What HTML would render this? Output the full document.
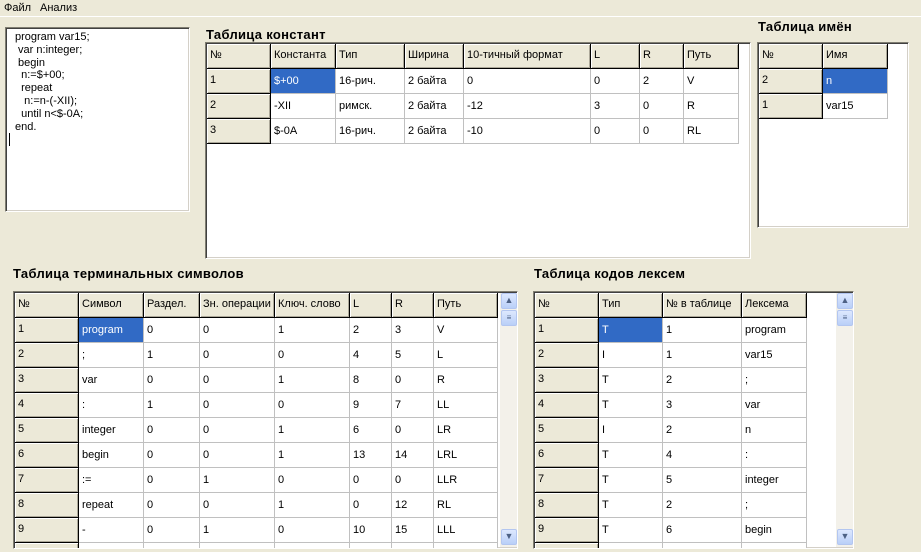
<!DOCTYPE html>
<html><head><meta charset="utf-8"><style>
*{box-sizing:border-box;margin:0;padding:0}
body{width:921px;height:552px;background:#ece9d8;font-family:"Liberation Sans","DejaVu Sans",sans-serif;font-size:11px;color:#000;position:relative;overflow:hidden}
.menu{position:absolute;left:0;top:0;width:921px;height:17px;border-bottom:1px solid #fff}
.menu span{position:absolute;top:2px}
.title{position:absolute;font-weight:bold;font-size:13px;letter-spacing:0.3px}
.box{position:absolute;background:#fff;border:1px solid;border-color:#7f7d71 #fff #fff #7f7d71;box-shadow:inset 1px 1px 0 #404040,inset -1px -1px 0 #d4d0c8;overflow:hidden}
.grid{position:absolute;left:1px;top:1px}
.r{display:flex;height:25px}
.c{height:25px;border-right:1px solid #c0c0c0;border-bottom:1px solid #c0c0c0;padding:6px 0 0 3px;white-space:nowrap;overflow:hidden;background:#fff}
.h{background:#ece9d8;border-right:1px solid #000;border-bottom:1px solid #000;box-shadow:inset 1px 1px 0 #fff,inset -1px -1px 0 #aca899;padding-top:5px}
.sel{background:#316ac5;color:#fff}
.sb{position:absolute;width:18px;background:#f3f1ea;border-left:1px solid #fff}
.btn{position:absolute;left:1px;width:16px;height:16px;background:linear-gradient(#dde8fe,#b9cff8);border:1px solid #b3c6f0;border-radius:2px;color:#4d6185;font-size:9px;text-align:center;line-height:13px}
.memo{position:absolute;left:5px;top:27px;width:185px;height:185px}
.memo pre{font-family:"Liberation Sans",sans-serif;font-size:11px;line-height:12.8px;position:absolute;left:9px;top:3px}
</style></head><body>
<div class="menu"><span style="left:4px">Файл</span><span style="left:40px">Анализ</span></div>

<div class="box memo"><pre>program var15;
 var n:integer;
 begin
  n:=$+00;
  repeat
   n:=n-(-XII);
  until n&lt;$-0A;
end.</pre><div style="position:absolute;left:3px;top:105px;width:1px;height:13px;background:#000"></div></div>

<div class="title" style="left:206px;top:27px">Таблица констант</div>
<div class="box" style="left:205px;top:42px;width:546px;height:217px">
<div class="grid">
<div class="r"><div class="c h" style="width:64px">№</div><div class="c h" style="width:65px">Константа</div><div class="c h" style="width:69px">Тип</div><div class="c h" style="width:59px">Ширина</div><div class="c h" style="width:127px">10-тичный формат</div><div class="c h" style="width:49px">L</div><div class="c h" style="width:44px">R</div><div class="c h" style="width:55px">Путь</div></div>
<div class="r"><div class="c h" style="width:64px">1</div><div class="c sel" style="width:65px">$+00</div><div class="c" style="width:69px">16-рич.</div><div class="c" style="width:59px">2 байта</div><div class="c" style="width:127px">0</div><div class="c" style="width:49px">0</div><div class="c" style="width:44px">2</div><div class="c" style="width:55px">V</div></div>
<div class="r"><div class="c h" style="width:64px">2</div><div class="c" style="width:65px">-XII</div><div class="c" style="width:69px">римск.</div><div class="c" style="width:59px">2 байта</div><div class="c" style="width:127px">-12</div><div class="c" style="width:49px">3</div><div class="c" style="width:44px">0</div><div class="c" style="width:55px">R</div></div>
<div class="r"><div class="c h" style="width:64px">3</div><div class="c" style="width:65px">$-0A</div><div class="c" style="width:69px">16-рич.</div><div class="c" style="width:59px">2 байта</div><div class="c" style="width:127px">-10</div><div class="c" style="width:49px">0</div><div class="c" style="width:44px">0</div><div class="c" style="width:55px">RL</div></div>
</div></div>

<div class="title" style="left:758px;top:19px">Таблица имён</div>
<div class="box" style="left:757px;top:42px;width:152px;height:186px">
<div class="grid">
<div class="r"><div class="c h" style="width:64px">№</div><div class="c h" style="width:65px">Имя</div></div>
<div class="r"><div class="c h" style="width:64px">2</div><div class="c sel" style="width:65px">n</div></div>
<div class="r"><div class="c h" style="width:64px">1</div><div class="c" style="width:65px">var15</div></div>
</div></div>

<div class="title" style="left:13px;top:266px">Таблица терминальных символов</div>
<div class="box" style="left:13px;top:291px;width:505px;height:258px">
<div class="grid">
<div class="r"><div class="c h" style="width:64px">№</div><div class="c h" style="width:65px">Символ</div><div class="c h" style="width:56px">Раздел.</div><div class="c h" style="width:75px">Зн. операции</div><div class="c h" style="width:75px">Ключ. слово</div><div class="c h" style="width:42px">L</div><div class="c h" style="width:42px">R</div><div class="c h" style="width:64px">Путь</div></div>
<div class="r"><div class="c h" style="width:64px">1</div><div class="c sel" style="width:65px">program</div><div class="c" style="width:56px">0</div><div class="c" style="width:75px">0</div><div class="c" style="width:75px">1</div><div class="c" style="width:42px">2</div><div class="c" style="width:42px">3</div><div class="c" style="width:64px">V</div></div>
<div class="r"><div class="c h" style="width:64px">2</div><div class="c" style="width:65px">;</div><div class="c" style="width:56px">1</div><div class="c" style="width:75px">0</div><div class="c" style="width:75px">0</div><div class="c" style="width:42px">4</div><div class="c" style="width:42px">5</div><div class="c" style="width:64px">L</div></div>
<div class="r"><div class="c h" style="width:64px">3</div><div class="c" style="width:65px">var</div><div class="c" style="width:56px">0</div><div class="c" style="width:75px">0</div><div class="c" style="width:75px">1</div><div class="c" style="width:42px">8</div><div class="c" style="width:42px">0</div><div class="c" style="width:64px">R</div></div>
<div class="r"><div class="c h" style="width:64px">4</div><div class="c" style="width:65px">:</div><div class="c" style="width:56px">1</div><div class="c" style="width:75px">0</div><div class="c" style="width:75px">0</div><div class="c" style="width:42px">9</div><div class="c" style="width:42px">7</div><div class="c" style="width:64px">LL</div></div>
<div class="r"><div class="c h" style="width:64px">5</div><div class="c" style="width:65px">integer</div><div class="c" style="width:56px">0</div><div class="c" style="width:75px">0</div><div class="c" style="width:75px">1</div><div class="c" style="width:42px">6</div><div class="c" style="width:42px">0</div><div class="c" style="width:64px">LR</div></div>
<div class="r"><div class="c h" style="width:64px">6</div><div class="c" style="width:65px">begin</div><div class="c" style="width:56px">0</div><div class="c" style="width:75px">0</div><div class="c" style="width:75px">1</div><div class="c" style="width:42px">13</div><div class="c" style="width:42px">14</div><div class="c" style="width:64px">LRL</div></div>
<div class="r"><div class="c h" style="width:64px">7</div><div class="c" style="width:65px">:=</div><div class="c" style="width:56px">0</div><div class="c" style="width:75px">1</div><div class="c" style="width:75px">0</div><div class="c" style="width:42px">0</div><div class="c" style="width:42px">0</div><div class="c" style="width:64px">LLR</div></div>
<div class="r"><div class="c h" style="width:64px">8</div><div class="c" style="width:65px">repeat</div><div class="c" style="width:56px">0</div><div class="c" style="width:75px">0</div><div class="c" style="width:75px">1</div><div class="c" style="width:42px">0</div><div class="c" style="width:42px">12</div><div class="c" style="width:64px">RL</div></div>
<div class="r"><div class="c h" style="width:64px">9</div><div class="c" style="width:65px">-</div><div class="c" style="width:56px">0</div><div class="c" style="width:75px">1</div><div class="c" style="width:75px">0</div><div class="c" style="width:42px">10</div><div class="c" style="width:42px">15</div><div class="c" style="width:64px">LLL</div></div>
<div class="r"><div class="c h" style="width:64px"></div><div class="c" style="width:65px"></div><div class="c" style="width:56px"></div><div class="c" style="width:75px"></div><div class="c" style="width:75px"></div><div class="c" style="width:42px"></div><div class="c" style="width:42px"></div><div class="c" style="width:64px"></div></div>
</div>
<div class="sb" style="left:485px;top:1px;height:254px"><div class="btn" style="top:0">&#9650;</div><div class="btn" style="top:17px;font-size:8px">≡</div><div class="btn" style="top:236px">&#9660;</div></div>
</div>

<div class="title" style="left:534px;top:266px">Таблица кодов лексем</div>
<div class="box" style="left:533px;top:291px;width:321px;height:258px">
<div class="grid">
<div class="r"><div class="c h" style="width:64px">№</div><div class="c h" style="width:64px">Тип</div><div class="c h" style="width:79px">№ в таблице</div><div class="c h" style="width:65px">Лексема</div></div>
<div class="r"><div class="c h" style="width:64px">1</div><div class="c sel" style="width:64px">T</div><div class="c" style="width:79px">1</div><div class="c" style="width:65px">program</div></div>
<div class="r"><div class="c h" style="width:64px">2</div><div class="c" style="width:64px">I</div><div class="c" style="width:79px">1</div><div class="c" style="width:65px">var15</div></div>
<div class="r"><div class="c h" style="width:64px">3</div><div class="c" style="width:64px">T</div><div class="c" style="width:79px">2</div><div class="c" style="width:65px">;</div></div>
<div class="r"><div class="c h" style="width:64px">4</div><div class="c" style="width:64px">T</div><div class="c" style="width:79px">3</div><div class="c" style="width:65px">var</div></div>
<div class="r"><div class="c h" style="width:64px">5</div><div class="c" style="width:64px">I</div><div class="c" style="width:79px">2</div><div class="c" style="width:65px">n</div></div>
<div class="r"><div class="c h" style="width:64px">6</div><div class="c" style="width:64px">T</div><div class="c" style="width:79px">4</div><div class="c" style="width:65px">:</div></div>
<div class="r"><div class="c h" style="width:64px">7</div><div class="c" style="width:64px">T</div><div class="c" style="width:79px">5</div><div class="c" style="width:65px">integer</div></div>
<div class="r"><div class="c h" style="width:64px">8</div><div class="c" style="width:64px">T</div><div class="c" style="width:79px">2</div><div class="c" style="width:65px">;</div></div>
<div class="r"><div class="c h" style="width:64px">9</div><div class="c" style="width:64px">T</div><div class="c" style="width:79px">6</div><div class="c" style="width:65px">begin</div></div>
<div class="r"><div class="c h" style="width:64px"></div><div class="c" style="width:64px"></div><div class="c" style="width:79px"></div><div class="c" style="width:65px"></div></div>
</div>
<div class="sb" style="left:301px;top:1px;height:254px"><div class="btn" style="top:0">&#9650;</div><div class="btn" style="top:17px;font-size:8px">≡</div><div class="btn" style="top:236px">&#9660;</div></div>
</div>
</body></html>
